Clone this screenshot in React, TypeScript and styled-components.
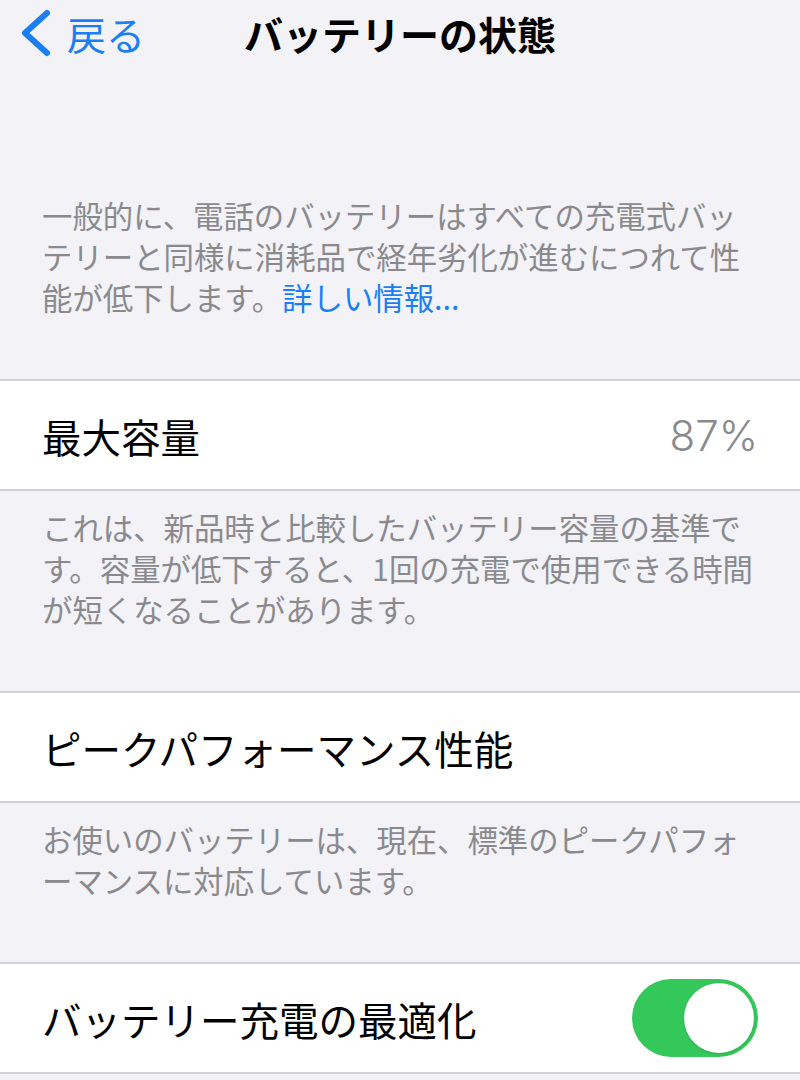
import { useState } from "react";
import styled, { createGlobalStyle } from "styled-components";

const GlobalStyle = createGlobalStyle`
  html, body {
    margin: 0;
    padding: 0;
    background: #f2f2f7;
  }
  body {
    font-family: "Noto Sans CJK JP", "Noto Sans", sans-serif;
    -webkit-font-smoothing: antialiased;
  }
`;

const BLUE = "#1a7ff5";
const GRAY_TEXT = "#8a8a8e";

// iOS wraps these footers by character count, so the lines are kept as in the screenshot
const Lines = ({ lines }: { lines: React.ReactNode[] }) => (
  <>
    {lines.map((line, i) => (
      <Line key={i}>{line}</Line>
    ))}
  </>
);

export default function App() {
  const [optimized, setOptimized] = useState(true);

  return (
    <>
      <GlobalStyle />
      <Page lang="ja">
        <NavBar>
          <BackButton type="button">
            <ChevronLeft />
            <span>戻る</span>
          </BackButton>
          <Title>バッテリーの状態</Title>
          <span />
        </NavBar>

        <Footnote $top={129}>
          <Lines
            lines={[
              "一般的に、電話のバッテリーはすべての充電式バッ",
              "テリーと同様に消耗品で経年劣化が進むにつれて性",
              <>
                能が低下します。<Link href="#">詳しい情報...</Link>
              </>,
            ]}
          />
        </Footnote>

        <Row>
          <RowLabel>最大容量</RowLabel>
          <RowValue>87%</RowValue>
        </Row>

        <Footnote>
          <Lines
            lines={[
              "これは、新品時と比較したバッテリー容量の基準で",
              "す。容量が低下すると、1回の充電で使用できる時間",
              "が短くなることがあります。",
            ]}
          />
        </Footnote>

        <Row>
          <RowLabel>ピークパフォーマンス性能</RowLabel>
        </Row>

        <Footnote>
          <Lines
            lines={[
              "お使いのバッテリーは、現在、標準のピークパフォ",
              "ーマンスに対応しています。",
            ]}
          />
        </Footnote>

        <Row>
          <RowLabel>バッテリー充電の最適化</RowLabel>
          <Toggle
            type="button"
            role="switch"
            aria-checked={optimized}
            $on={optimized}
            onClick={() => setOptimized((v) => !v)}
          >
            <Knob $on={optimized} />
          </Toggle>
        </Row>
      </Page>
    </>
  );
}

const ChevronLeft = () => (
  <svg width="32" height="48" viewBox="0 0 32 48" fill="none">
    <path
      d="M28 4 L6 24 L28 44"
      stroke={BLUE}
      strokeWidth="6"
      strokeLinecap="round"
      strokeLinejoin="round"
    />
  </svg>
);

/* --- Styled Components --- */

const Page = styled.div`
  width: 800px;
  min-height: 1080px;
  background: #f2f2f7;
  overflow: hidden;
`;

const NavBar = styled.header`
  height: 66px;
  display: grid;
  grid-template-columns: 1fr auto 1fr;
  align-items: center;
`;

const BackButton = styled.button`
  justify-self: start;
  display: flex;
  align-items: center;
  gap: 16px;
  margin: 0;
  padding: 0 0 0 19px;
  border: none;
  background: transparent;
  color: ${BLUE};
  font-family: "Noto Sans CJK JP", sans-serif;
  font-size: 39px;
  line-height: 1;
  cursor: pointer;

  svg {
    flex-shrink: 0;
  }
`;

const Title = styled.h1`
  margin: 0;
  font-family: "Noto Sans CJK JP", sans-serif;
  font-size: 39px;
  font-weight: 700;
  color: #000;
  line-height: 1;
`;

const Footnote = styled.p<{ $top?: number }>`
  margin: 0;
  padding: ${({ $top }) => $top ?? 16}px 30px 61px 42px;
  font-size: 30.4px;
  line-height: 41px;
  color: ${GRAY_TEXT};
`;

const Line = styled.span`
  display: block;
  white-space: nowrap;
`;

const Link = styled.a`
  color: ${BLUE};
  text-decoration: none;
`;

const Row = styled.div`
  height: 112px;
  box-sizing: border-box;
  display: flex;
  align-items: center;
  justify-content: space-between;
  padding: 0 42px;
  background: #fff;
  border-top: 2px solid #d1d1d5;
  border-bottom: 2px solid #d1d1d5;
`;

const RowLabel = styled.span`
  font-size: 39.5px;
  color: #000;
`;

const RowValue = styled.span`
  font-family: Inter, "Noto Sans", sans-serif;
  font-size: 42px;
  font-weight: 300;
  color: ${GRAY_TEXT};
`;

const Toggle = styled.button<{ $on: boolean }>`
  position: relative;
  width: 126px;
  height: 78px;
  padding: 0;
  border: none;
  border-radius: 39px;
  background: ${({ $on }) => ($on ? "#34c759" : "#e9e9eb")};
  cursor: pointer;
  flex-shrink: 0;
  transition: background 200ms ease;
`;

const Knob = styled.span<{ $on: boolean }>`
  position: absolute;
  top: 4px;
  left: ${({ $on }) => ($on ? "52px" : "4px")};
  width: 70px;
  height: 70px;
  border-radius: 50%;
  background: #fff;
  box-shadow: 0 1px 3px rgba(0, 0, 0, 0.12);
  transition: left 200ms ease;
`;
